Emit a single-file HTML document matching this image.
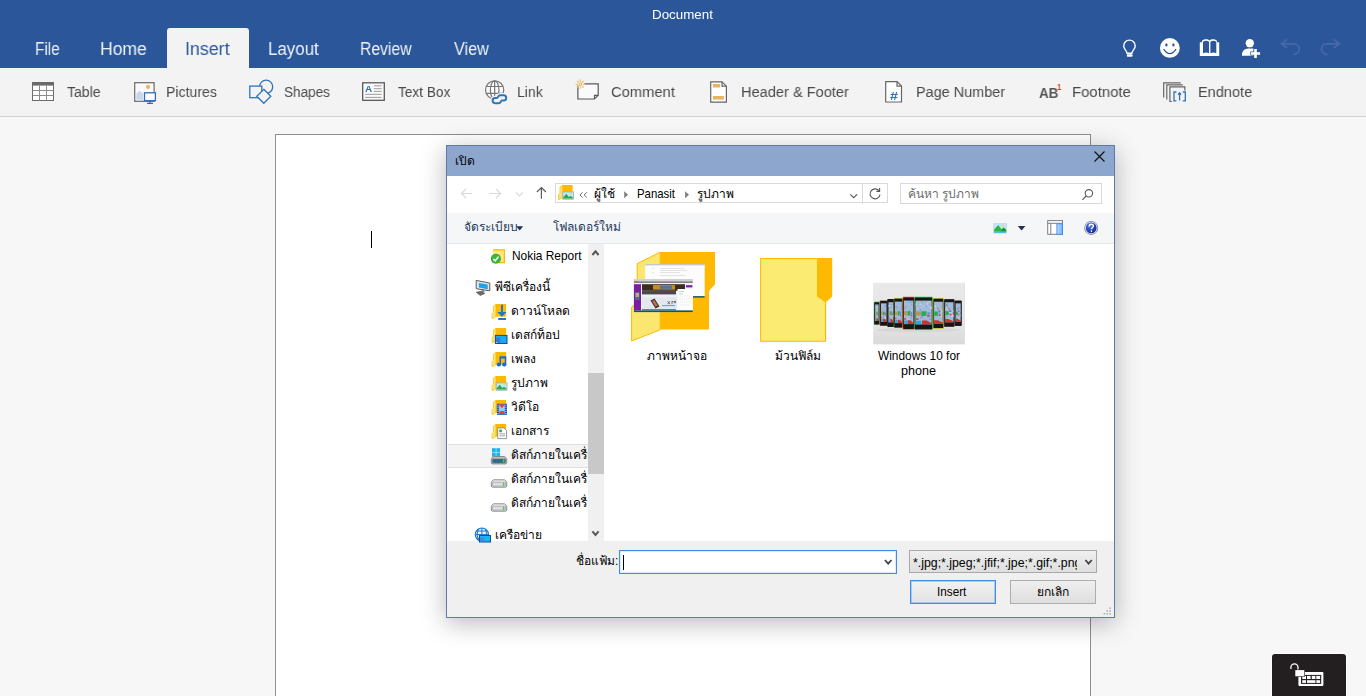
<!DOCTYPE html>
<html lang="th">
<head>
<meta charset="utf-8">
<title>Document - Word</title>
<style>
*{box-sizing:border-box;margin:0;padding:0}
html,body{width:1366px;height:696px;overflow:hidden;background:#f7f7f7;font-family:"Liberation Sans",sans-serif}
.g{position:absolute;left:0;top:0}
.a{position:absolute}
.t{position:absolute;white-space:nowrap;transform-origin:0 0;line-height:20px;height:20px}
svg{position:absolute;overflow:visible}
#header .t,#ribbon .t{will-change:transform}
#hdr{position:absolute;left:0;top:0;width:1366px;height:68px;background:#2b579a}
#tabsel{position:absolute;left:167px;top:28px;width:82px;height:40px;background:#f3f3f3;border-radius:3px 3px 0 0}
#rib{position:absolute;left:0;top:68px;width:1366px;height:49px;background:#f3f3f3;border-bottom:1px solid #d2d2d2}
#page{position:absolute;left:275px;top:134px;width:816px;height:570px;background:#fff;border:1px solid #8e8e8e}
#caret{position:absolute;left:371px;top:231px;width:1px;height:17px;background:#000}
#dlg{position:absolute;left:446px;top:145px;width:669px;height:473px;background:#fff;border:1px solid #5f79aa;box-shadow:0 5px 24px rgba(0,0,0,.28)}
#dtitle{position:absolute;left:447px;top:146px;width:667px;height:30px;background:#8da6ce}
#dtool{position:absolute;left:447px;top:213px;width:667px;height:31px;background:#f5f6f7;border-bottom:1px solid #e6e7e8}
#dfoot{position:absolute;left:447px;top:541px;width:667px;height:76px;background:#f0f0f0}
#kbd{position:absolute;left:1272px;top:654px;width:74px;height:50px;background:#231f20;border-radius:3px 3px 0 0;box-shadow:0 0 0 1px rgba(255,255,255,.7)}
</style>
</head>
<body>
<!-- ================= Word header ================= -->
<div id="hdr"></div>
<div class="g" id="header">
<div id="tabsel"></div>
<span class="t" style="left:652.14px;top:5px;font-size:13px;color:#fff;transform:scaleX(1.0276)">Document</span>
<span class="t" style="left:35.24px;top:39px;font-size:18.3px;color:rgba(255,255,255,.92);transform:scaleX(0.8406)">File</span>
<span class="t" style="left:99.96px;top:39px;font-size:18.3px;color:rgba(255,255,255,.92);transform:scaleX(0.9613)">Home</span>
<span class="t" style="left:184.70px;top:39px;font-size:18.3px;color:#2b579a;transform:scaleX(0.9732)">Insert</span>
<span class="t" style="left:268.21px;top:39px;font-size:18.3px;color:rgba(255,255,255,.92);transform:scaleX(0.9239)">Layout</span>
<span class="t" style="left:359.51px;top:39px;font-size:18.3px;color:rgba(255,255,255,.92);transform:scaleX(0.8598)">Review</span>
<span class="t" style="left:454.49px;top:39px;font-size:18.3px;color:rgba(255,255,255,.92);transform:scaleX(0.8866)">View</span>
<svg style="left:1120px;top:36px" width="20" height="24" viewBox="1120 36 20 24"><path d="M1127 53.2C1127 50.4 1123.7 49.6 1123.7 45.9a5.75 5.75 0 0 1 11.5 0C1135.2 49.6 1131.9 50.4 1131.9 53.2Z" fill="none" stroke="#fff" stroke-width="1.4"/><rect x="1126.8" y="54.3" width="5.8" height="2.4" rx=".9" fill="#fff"/></svg>
<svg style="left:1158px;top:36px" width="24" height="24" viewBox="1158 36 24 24"><circle cx="1169.85" cy="47.9" r="9.9" fill="#fff"/><ellipse cx="1166.4" cy="44.9" rx="1.15" ry="1.65" fill="#2b579a"/><ellipse cx="1173.4" cy="44.9" rx="1.15" ry="1.65" fill="#2b579a"/><path d="M1164 49.6Q1169.85 57.6 1175.7 49.6" fill="none" stroke="#2b579a" stroke-width="1.4" stroke-linecap="round"/></svg>
<svg style="left:1198px;top:36px" width="24" height="24" viewBox="1198 36 24 24"><path d="M1199.8 42.3H1202V40.8C1204.5 38.8 1208 38.9 1209.5 40.6C1211 38.9 1214.5 38.8 1217 40.8V42.3H1219.2V56.1H1199.8Z" fill="#fff"/><path d="M1203 41.7Q1206 39.9 1209 41.7V53.2Q1206 51.9 1203 53.2ZM1210.4 41.7Q1213.4 39.9 1216.3 41.7V53.2Q1213.4 51.9 1210.4 53.2Z" fill="#2b579a"/></svg>
<svg style="left:1240px;top:36px" width="24" height="24" viewBox="1240 36 24 24"><circle cx="1249.8" cy="43.2" r="4.15" fill="#fff"/><path d="M1241.9 55.7Q1241.9 48.4 1248.6 48.4H1253.6V55.7Z" fill="#fff"/><path d="M1254.2 48.9h2.6v3.3h3.3v2.6h-3.3v3.1h-2.6v-3.1h-3.3v-2.6h3.3z" fill="#fff" stroke="#2b579a" stroke-width="1.3" paint-order="stroke"/></svg>
<svg style="left:1278px;top:36px" width="24" height="24" viewBox="1278 36 24 24"><path d="M1287 39.6L1281.4 43.8L1287 48M1281.8 43.8H1293.5C1297.5 43.8 1299.3 46.5 1299.3 49C1299.3 52 1297 54.3 1293.3 54.3" fill="none" stroke="#4769a9" stroke-width="1.7"/></svg>
<svg style="left:1318px;top:36px" width="24" height="24" viewBox="1318 36 24 24"><path d="M1333.8 39.6L1339.4 43.8L1333.8 48M1339 43.8H1327.3C1323.3 43.8 1321.5 46.5 1321.5 49C1321.5 52 1323.8 54.3 1327.5 54.3" fill="none" stroke="#4769a9" stroke-width="1.7"/></svg>

</div>
<!-- ================= Ribbon ================= -->
<div id="rib"></div>
<div class="g" id="ribbon">
<svg style="left:30px;top:78px" width="28" height="28" viewBox="30 78 28 28"><rect x="32.5" y="82.5" width="21" height="18" fill="#fff" stroke="#6a6a6a"/><rect x="32" y="82" width="22" height="3.6" fill="#6a6a6a"/><path d="M39.5 85.6V100.5M46.5 85.6V100.5M32.5 90.5H53.5M32.5 95.5H53.5" stroke="#8c8c8c" fill="none"/></svg>
<svg style="left:132px;top:78px" width="28" height="28" viewBox="132 78 28 28"><rect x="134.7" y="82.7" width="19.4" height="18.6" fill="#fafafa" stroke="#6a6a6a" stroke-width="1.2"/><circle cx="148" cy="86.9" r="2.1" fill="#e8b76b"/><path d="M136.3 99.7V93.8L139.6 90.8L142.9 93.8V99.7Z" fill="#c5d9ec"/><rect x="144.5" y="92.8" width="10.9" height="7.9" fill="#fff" stroke="#2e6db4" stroke-width="1.3"/><path d="M150 100.9V103.2M147 103.3H153" stroke="#2e6db4" stroke-width="1.3" fill="none"/></svg>
<svg style="left:246px;top:78px" width="30" height="28" viewBox="246 78 30 28"><g stroke="#2e75b6" stroke-width="1.3"><circle cx="266.1" cy="86.8" r="6.6" fill="none"/><rect x="249.8" y="86.1" width="12" height="11.6" fill="#f3f3f3"/><path d="M263.8 89.3L270.8 96.3L263.8 103.3L256.8 96.3Z" fill="#f3f3f3"/></g></svg>
<svg style="left:360px;top:78px" width="28" height="28" viewBox="360 78 28 28"><rect x="362.7" y="82.8" width="21.6" height="17.5" fill="#fafafa" stroke="#595959" stroke-width="1.3"/><path d="M373.9 85.8H381.6M373.9 88.7H381.6M373.9 91.4H381.6M365.2 94.3H381.6M365.2 97.4H381.6" stroke="#9a9a9a" fill="none"/></svg>
<svg style="left:482px;top:78px" width="28" height="28" viewBox="482 78 28 28"><g fill="none" stroke="#777" stroke-width="1.2"><circle cx="494.65" cy="89.9" r="9.1" fill="#fafafa"/><ellipse cx="494.65" cy="89.9" rx="4.3" ry="9.1"/><path d="M494.65 80.8V99M486.4 86.5H502.9M486.4 93.4H502.9"/></g><g fill="none" stroke-linecap="round"><path d="M497 99.3h-1.8a2.6 2.6 0 0 0 0 5.2h3.2a2.6 2.6 0 0 0 2.4-1.6M501.7 101.8h1.9a2.6 2.6 0 0 0 0-5.2h-3.2a2.6 2.6 0 0 0-2.4 1.6" stroke="#f3f3f3" stroke-width="4.6" transform="translate(0,-1.3)"/><path d="M497 99.3h-1.8a2.6 2.6 0 0 0 0 5.2h3.2a2.6 2.6 0 0 0 2.4-1.6M501.7 101.8h1.9a2.6 2.6 0 0 0 0-5.2h-3.2a2.6 2.6 0 0 0-2.4 1.6" stroke="#2e75b6" stroke-width="2" transform="translate(0,-1.3)"/></g></svg>
<svg style="left:574px;top:78px" width="28" height="28" viewBox="574 78 28 28"><path d="M577.9 85.5V99H594.5L598.2 95.3V83.8H584.5" fill="#fafafa" stroke="#595959" stroke-width="1.2"/><path d="M594.5 99V95.3H598.2" fill="none" stroke="#595959" stroke-width="1.2"/><path d="M580.3 79.6v2.2M580.3 86.6v2.2M575.7 84.2h2.2M582.7 84.2h2.2M577 80.9l1.6 1.6M583.6 80.9l-1.6 1.6M577 87.5l1.6-1.6M583.6 87.5l-1.6-1.6" stroke="#edb458" stroke-width="1.1" fill="none"/><rect x="579.2" y="83.1" width="2.2" height="2.2" fill="none" stroke="#edb458" stroke-width=".9"/></svg>
<svg style="left:708px;top:78px" width="24" height="28" viewBox="708 78 24 28"><path d="M710.7 81.8H722L726.4 86.2V102.1H710.7Z" fill="#fff" stroke="#666" stroke-width="1.2"/><path d="M722 81.8V86.2H726.4" fill="none" stroke="#666" stroke-width="1.2"/><rect x="712.9" y="84" width="7.2" height="3.5" fill="#e8b660"/><rect x="712.9" y="96" width="11" height="3.6" fill="#e8b660"/></svg>
<svg style="left:883px;top:78px" width="24" height="28" viewBox="883 78 24 28"><path d="M885.7 81.6H897L901.5 86.1V102H885.7Z" fill="#fff" stroke="#666" stroke-width="1.2"/><path d="M897 81.6V86.1H901.5" fill="none" stroke="#666" stroke-width="1.2"/></svg>
<svg style="left:1160px;top:78px" width="30" height="28" viewBox="1160 78 30 28"><path d="M1180.7 82.8H1163.7V97.6M1182.8 84.8H1166.8V99.6M1171.9 101.5H1169.9V86.9H1184.8V90.4" fill="none" stroke="#666" stroke-width="1.2"/><path d="M1176.4 92H1174V100.9H1176.4M1182.8 92H1185.3V100.9H1182.8M1179.6 100.4V93.2M1178.1 94.6L1179.6 92.7L1181.1 94.6" fill="none" stroke="#2e75b6" stroke-width="1.3"/></svg>

<span class="t" style="left:66.66px;top:82px;font-size:15.5px;color:#4a4a4a;transform:scaleX(0.9056)">Table</span>
<span class="t" style="left:165.86px;top:82px;font-size:15.5px;color:#4a4a4a;transform:scaleX(0.9099)">Pictures</span>
<span class="t" style="left:283.94px;top:82px;font-size:15.5px;color:#4a4a4a;transform:scaleX(0.8741)">Shapes</span>
<span class="t" style="left:397.87px;top:82px;font-size:15.5px;color:#4a4a4a;transform:scaleX(0.8815)">Text Box</span>
<span class="t" style="left:517.37px;top:82px;font-size:15.5px;color:#4a4a4a;transform:scaleX(0.9069)">Link</span>
<span class="t" style="left:611.04px;top:82px;font-size:15.5px;color:#4a4a4a;transform:scaleX(0.9492)">Comment</span>
<span class="t" style="left:741.12px;top:82px;font-size:15.5px;color:#4a4a4a;transform:scaleX(0.9410)">Header &amp; Footer</span>
<span class="t" style="left:916.24px;top:82px;font-size:15.5px;color:#4a4a4a;transform:scaleX(0.9317)">Page Number</span>
<span class="t" style="left:1038.65px;top:83px;font-size:14.6px;color:#555;font-weight:700;transform:scaleX(0.9200)">AB</span>
<span class="t" style="left:1057.10px;top:77px;font-size:9.9px;color:#d24726;font-weight:700;transform:scaleX(0.8000)">1</span>
<span class="t" style="left:364.93px;top:79px;font-size:9.3px;color:#2e6db4;font-weight:700;transform:scaleX(1.0720)">A</span>
<span class="t" style="left:890.03px;top:87px;font-size:10.4px;color:#2e75b6;font-weight:700;transform:scaleX(1.3818)">#</span>
<span class="t" style="left:1071.80px;top:82px;font-size:15.5px;color:#4a4a4a;transform:scaleX(0.9620)">Footnote</span>
<span class="t" style="left:1197.53px;top:82px;font-size:15.5px;color:#4a4a4a;transform:scaleX(0.9381)">Endnote</span>
</div>
<!-- ================= Document canvas ================= -->
<div class="g" id="doc">
<div id="page"></div>
<div id="caret"></div>
</div>
<!-- ================= Open-file dialog ================= -->
<div id="dlg"></div>
<div class="g" id="dialog">
<div id="dtitle"></div>
<div id="dtool"></div>
<div id="dfoot"></div>
<div class="a" id="addr" style="left:555px;top:183px;width:333px;height:20px;border:1px solid #d9d9d9;background:#fff"></div>
<div class="a" style="left:862px;top:183px;width:1px;height:21px;background:#d9d9d9"></div>
<div class="a" id="search" style="left:900px;top:183px;width:202px;height:21px;border:1px solid #d9d9d9;background:#fff"></div>
<div class="a" id="navsel" style="left:448px;top:444px;width:140px;height:24px;background:#f4f4f4;border:1px solid #e0e0e0;border-left:0;border-right:0"></div>
<div class="a" id="sbtrack" style="left:588px;top:244px;width:16px;height:297px;background:#f0f0f0"></div>
<div class="a" id="sbthumb" style="left:588px;top:373px;width:16px;height:101px;background:#c8c8c8"></div>
<div class="a" id="fname" style="left:619px;top:550px;width:278px;height:24px;border:1px solid #3d8ce6;background:#fff;box-shadow:inset 0 0 0 1px rgba(61,140,230,.18)"></div>
<div class="a" style="left:623px;top:555px;width:1px;height:15px;background:#000"></div>
<div class="a" id="filter" style="left:909px;top:550px;width:188px;height:23px;border:1px solid #a9a9a9;background:linear-gradient(#efefef,#dfdfdf)"></div>
<div class="a" id="btnok" style="left:910px;top:580px;width:86px;height:24px;border:1px solid #3c8de8;background:linear-gradient(#f1f1f1,#e3e3e3);box-shadow:inset 0 0 0 1px rgba(60,141,232,.35)"></div>
<div class="a" id="btncancel" style="left:1010px;top:580px;width:86px;height:24px;border:1px solid #adadad;background:linear-gradient(#efefef,#dedede)"></div>

<svg style="left:1090px;top:148px" width="18" height="18" viewBox="1090 148 18 18"><path d="M1094.5 151.5L1104.5 161.5M1104.5 151.5L1094.5 161.5" stroke="#111" stroke-width="1.15" fill="none"/></svg>
<svg style="left:458px;top:184px" width="92" height="20" viewBox="458 184 92 20"><g fill="none" stroke-width="1.2"><path d="M472 193.5H461.6M466 189L461.5 193.5L466 198" stroke="#dadada"/><path d="M489.5 193.5H500.4M496 189L500.5 193.5L496 198" stroke="#dadada"/><path d="M516 192.4L519.4 195.8L522.8 192.4" stroke="#dadada"/><path d="M541.4 198.8V187.8M536.9 192L541.4 187.5L545.9 192" stroke="#5c5c5c"/></g></svg>
<svg style="left:576px;top:184px" width="320" height="20" viewBox="576 184 320 20"><g fill="none" stroke="#6d6d6d" stroke-width="1"><path d="M582.6 192.3L579.9 194.9L582.6 197.5M586.8 192.3L584.1 194.9L586.8 197.5"/><path d="M850.3 194.3L853.7 197.7L857.1 194.3" stroke="#555" stroke-width="1.1"/><path d="M879.3 191.2A5 5 0 1 0 880 194.6M876.3 191.4H879.6V188.1" stroke="#555" stroke-width="1.1"/></g><path d="M624.2 191.3L628.1 194.8L624.2 198.3ZM685.1 191.3L689 194.8L685.1 198.3Z" fill="#7f7f7f"/></svg>
<svg style="left:1080px;top:186px" width="16" height="16" viewBox="1080 186 16 16"><g fill="none" stroke="#5a5a5a" stroke-width="1.1"><circle cx="1088.9" cy="193.3" r="3.7"/><path d="M1086.2 196L1082.4 199.8"/></g></svg>
<svg style="left:514px;top:224px" width="12" height="9" viewBox="514 224 12 9"><path d="M516.2 226.3H523.2L519.7 230.5Z" fill="#1e2f4f"/></svg>
<svg style="left:992px;top:222px" width="36" height="13" viewBox="992 222 36 13"><rect x="993.7" y="223.7" width="12.8" height="9.4" fill="#b9ecf7" stroke="#d6cccc" stroke-width=".7"/><circle cx="1002.5" cy="225.6" r="1.15" fill="#f5d83a"/><path d="M994.1 231.6V229.5L998.2 224.9L1001.6 229.3L1003.6 227.6L1006.1 230V231.6Z" fill="#36b049"/><path d="M1000.6 231.6L1003.6 227.6L1006.1 230V231.6Z" fill="#258c3a"/><rect x="994.1" y="231.4" width="12" height="1.3" fill="#1fb3e0"/><path d="M1017.8 226.1H1025.4L1021.6 230.4Z" fill="#1e2f4f"/></svg>
<svg style="left:1046px;top:219px" width="19" height="17" viewBox="1046 219 19 17"><defs><linearGradient id="pg" x1="0" x2="1"><stop offset="0" stop-color="#bcdafa"/><stop offset="1" stop-color="#74b2f6"/></linearGradient></defs><rect x="1047.7" y="220.6" width="14.8" height="13.7" fill="#fff" stroke="#7d7d7d" stroke-width="1"/><path d="M1047.7 223.3H1062.5M1050.8 223.3V234.3" stroke="#7d7d7d" stroke-width="1" fill="none"/><rect x="1056.9" y="223.8" width="5.6" height="10.5" fill="url(#pg)" stroke="#3b8df0" stroke-width=".9"/></svg>
<svg style="left:1083px;top:220px" width="17" height="17" viewBox="1083 220 17 17"><defs><radialGradient id="hg" cx=".38" cy=".3" r=".8"><stop offset="0" stop-color="#5a7fe8"/><stop offset=".55" stop-color="#2443b8"/><stop offset="1" stop-color="#15267a"/></radialGradient></defs><circle cx="1091.2" cy="227.9" r="7" fill="#7f87a3"/><circle cx="1091.2" cy="227.9" r="6.2" fill="#e3e7f3"/><circle cx="1091.2" cy="227.9" r="5.4" fill="url(#hg)"/><path d="M1089.2 226.4C1089.2 224.8 1090.2 224.2 1091.3 224.2C1092.5 224.2 1093.4 224.9 1093.4 226C1093.4 227.4 1091.4 227.7 1091.4 229.3" fill="none" stroke="#fff" stroke-width="1.5"/><circle cx="1091.4" cy="231.1" r=".85" fill="#fff"/></svg>
<svg style="left:590px;top:248px" width="12" height="292" viewBox="590 248 12 292"><g fill="none" stroke="#585858" stroke-width="2"><path d="M592.4 255L595.5 251.3L598.6 255M592.4 531.3L595.5 535L598.6 531.3"/></g></svg>
<svg style="left:882px;top:556px" width="12" height="12" viewBox="882 556 12 12"><path d="M884.9 560L888.2 563.6L891.5 560" fill="none" stroke="#444" stroke-width="1.8"/></svg>
<svg style="left:1083px;top:556px" width="12" height="12" viewBox="1083 556 12 12"><path d="M1085.4 560L1088.6 563.6L1091.8 560" fill="none" stroke="#444" stroke-width="1.8"/></svg>
<svg style="left:1102px;top:606px" width="10" height="10" viewBox="1102 606 10 10"><g fill="#b4b4b4"><rect x="1109.2" y="607.4" width="1.6" height="1.6"/><rect x="1106.4" y="610.2" width="1.6" height="1.6"/><rect x="1109.2" y="610.2" width="1.6" height="1.6"/><rect x="1103.6" y="613" width="1.6" height="1.6"/><rect x="1106.4" y="613" width="1.6" height="1.6"/><rect x="1109.2" y="613" width="1.6" height="1.6"/></g></svg>
<svg style="left:557px;top:184px" width="18" height="17" viewBox="557 184 18 17"><rect x="562.4" y="185" width="10.2" height="12.6" fill="#ffb900"/><path d="M562.4 185.3L559.9 187.2V193.4L558.6 194.5V199.8L562.4 197.8Z" fill="#fbe57a" stroke="#ffb900" stroke-width=".7"/><rect x="562.7" y="191.9" width="10.8" height="7.3" fill="#b9ecf7" stroke="#a9a9a9" stroke-width=".8"/><circle cx="570.9" cy="193.6" r=".9" fill="#f5d83a"/><path d="M563.2 198.6V197.2L566.3 193.8L568.9 197L570.5 195.7L573 197.8V198.6Z" fill="#2fa84f"/></svg>
<svg style="left:490px;top:248px" width="16" height="16" viewBox="490 248 16 16"><rect x="493.2" y="249.6" width="11.2" height="12.8" fill="#fce97a"/><path d="M493 249.9H504.4V262.6H499" fill="none" stroke="#ffb900" stroke-width="1.2"/><circle cx="495.9" cy="258.8" r="5" fill="#2ea52e"/><circle cx="495.9" cy="258.8" r="4.2" fill="#3db83d"/><path d="M493.4 258.9L495.2 260.9L498.5 256.6" fill="none" stroke="#fff" stroke-width="1.5"/></svg>
<svg style="left:475px;top:279px" width="16" height="18" viewBox="475 279 16 18"><path d="M476.2 280.4L489.8 283.1V290.8L476.2 288.7Z" fill="#e6e6e6" stroke="#5a5a5a" stroke-width="1"/><path d="M478.9 282.9L487.7 284.6V289.3L478.9 287.6Z" fill="#1aa3ec"/><path d="M481.6 289.7L484.4 290.2V292.6L481.6 292.2Z" fill="#8a8a8a"/><path d="M476.2 292.3L481 291.3L484.9 293.4L480.3 295.6Z" fill="#6a6a6a" stroke="#555" stroke-width=".6"/></svg>
<svg style="left:491px;top:304px" width="17" height="17" viewBox="491 304 17 17"><rect x="495.9" y="304" width="10.2" height="12.6" fill="#ffb900"/><path d="M495.9 304.3L493.4 306.2V312.4L492.1 313.5V318.8L495.9 316.8Z" fill="#fbe57a" stroke="#ffb900" stroke-width=".7"/><path d="M501 304.8h1.9v7.2h3.7l-4.65 4.7l-4.65-4.7h3.7zM498.2 317.9h7.8v2h-7.8z" fill="#1976d2"/></svg>
<svg style="left:491px;top:328px" width="17" height="17" viewBox="491 328 17 17"><rect x="495.9" y="328" width="10.2" height="12.6" fill="#ffb900"/><path d="M495.9 328.3L493.4 330.2V336.4L492.1 337.5V342.8L495.9 340.8Z" fill="#fbe57a" stroke="#ffb900" stroke-width=".7"/><rect x="495.4" y="335.4" width="11.6" height="8.1" fill="#1aa9ee" stroke="#0b4fa0" stroke-width="1"/><rect x="496" y="337.6" width="4.2" height="5.3" fill="#3a78d6"/><rect x="496.2" y="342" width=".9" height=".9" fill="#fff"/></svg>
<svg style="left:491px;top:352px" width="17" height="17" viewBox="491 352 17 17"><rect x="495.9" y="352" width="10.2" height="12.6" fill="#ffb900"/><path d="M495.9 352.3L493.4 354.2V360.4L492.1 361.5V366.8L495.9 364.8Z" fill="#fbe57a" stroke="#ffb900" stroke-width=".7"/><g fill="#1769d6"><path d="M499.5 356.2H506.3V364.4h-1.5V358.6H501V364.4h-1.5Z"/><ellipse cx="498.9" cy="364.5" rx="2.2" ry="1.9"/><ellipse cx="504.2" cy="364.5" rx="2.2" ry="1.9"/></g></svg>
<svg style="left:491px;top:376px" width="17" height="17" viewBox="491 376 17 17"><rect x="495.9" y="376" width="10.2" height="12.6" fill="#ffb900"/><path d="M495.9 376.3L493.4 378.2V384.4L492.1 385.5V390.8L495.9 388.8Z" fill="#fbe57a" stroke="#ffb900" stroke-width=".7"/><rect x="496.2" y="382.9" width="10.8" height="7.3" fill="#b9ecf7" stroke="#a9a9a9" stroke-width=".8"/><circle cx="504.4" cy="384.6" r=".9" fill="#f5d83a"/><path d="M496.7 389.6V388.2L499.8 384.8L502.4 388L504 386.7L506.5 388.8V389.6Z" fill="#2fa84f"/></svg>
<svg style="left:491px;top:400px" width="17" height="17" viewBox="491 400 17 17"><rect x="495.9" y="400" width="10.2" height="12.6" fill="#ffb900"/><path d="M495.9 400.3L493.4 402.2V408.4L492.1 409.5V414.8L495.9 412.8Z" fill="#fbe57a" stroke="#ffb900" stroke-width=".7"/><rect x="496.9" y="403.8" width="10.1" height="11" fill="#0f4fa8"/><rect x="499.1" y="404.6" width="5.7" height="9.4" fill="#8fd3f7"/><path d="M499.1 404.6h5.7l-2.85 3.6zM499.1 414a2.85 3.2 0 0 1 5.7 0z" fill="#e8402a"/><g fill="#d6ecff"><rect x="497.5" y="404.6" width="1" height="1.1"/><rect x="505.4" y="404.6" width="1" height="1.1"/><rect x="497.5" y="406.7" width="1" height="1.1"/><rect x="505.4" y="406.7" width="1" height="1.1"/><rect x="497.5" y="408.8" width="1" height="1.1"/><rect x="505.4" y="408.8" width="1" height="1.1"/><rect x="497.5" y="410.9" width="1" height="1.1"/><rect x="505.4" y="410.9" width="1" height="1.1"/><rect x="497.5" y="413" width="1" height="1.1"/><rect x="505.4" y="413" width="1" height="1.1"/></g></svg>
<svg style="left:491px;top:424px" width="17" height="17" viewBox="491 424 17 17"><rect x="495.9" y="424" width="10.2" height="12.6" fill="#ffb900"/><path d="M495.9 424.3L493.4 426.2V432.4L492.1 433.5V438.8L495.9 436.8Z" fill="#fbe57a" stroke="#ffb900" stroke-width=".7"/><path d="M497.7 427.9h6.2l2.7 2.7v8h-8.9z" fill="#fff" stroke="#8a8a8a" stroke-width=".9"/><rect x="499.3" y="429.6" width="2.6" height="2.6" fill="#2fa84f"/><path d="M499.3 433.8h5.8M499.3 435.8h5.8" stroke="#9a9a9a" stroke-width=".9" fill="none"/></svg>
<svg style="left:490px;top:447px" width="18" height="18" viewBox="490 447 18 18"><rect x="492" y="448.2" width="3.8" height="4" fill="#19b5f1"/><rect x="492" y="452.7" width="3.8" height="4" fill="#19b5f1"/><rect x="496.3" y="448.2" width="3.8" height="4" fill="#19b5f1"/><rect x="496.3" y="452.7" width="3.8" height="4" fill="#19b5f1"/><path d="M491.3 459.3Q491.3 457.9 493.6 456.5H504.4Q506.7 457.9 506.7 459.3V462.7Q506.7 463.9 505.4 463.9H492.6Q491.3 463.9 491.3 462.7Z" fill="#b9bcc0" stroke="#858585" stroke-width=".9"/><rect x="492.4" y="458.9" width="13.2" height="4" rx=".8" fill="#2a6c8c" stroke="#7a7a7a" stroke-width=".5"/><rect x="502.8" y="459.4" width="1.5" height="3" fill="#4fd02f"/></svg>
<svg style="left:490px;top:478px" width="18" height="11" viewBox="490 478 18 11"><path d="M491.3 482.6Q491.3 481.2 493.6 479.8H504.4Q506.7 481.2 506.7 482.6V486Q506.7 487.2 505.4 487.2H492.6Q491.3 487.2 491.3 486Z" fill="#ececec" stroke="#858585" stroke-width=".9"/><rect x="492.4" y="482.2" width="13.2" height="4" rx=".8" fill="#dcdde6" stroke="#7a7a7a" stroke-width=".5"/><rect x="502.8" y="482.7" width="1.5" height="3" fill="#4fd02f"/></svg>
<svg style="left:490px;top:502px" width="18" height="11" viewBox="490 502 18 11"><path d="M491.3 506.6Q491.3 505.2 493.6 503.8H504.4Q506.7 505.2 506.7 506.6V510Q506.7 511.2 505.4 511.2H492.6Q491.3 511.2 491.3 510Z" fill="#ececec" stroke="#858585" stroke-width=".9"/><rect x="492.4" y="506.2" width="13.2" height="4" rx=".8" fill="#dcdde6" stroke="#7a7a7a" stroke-width=".5"/><rect x="502.8" y="506.7" width="1.5" height="3" fill="#4fd02f"/></svg>
<svg style="left:474px;top:527px" width="18" height="14" viewBox="474 527 18 14"><circle cx="481.9" cy="534.6" r="6.6" fill="#e6f4fd" stroke="#1976d2" stroke-width="1.2"/><path d="M481.9 528V541M475.3 534.6H488.5M476.6 531H487.2M476.6 538.2H487.2M478.5 529C476.8 532.5 476.8 536.7 478.5 540.2M485.3 529C487 532.5 487 536.7 485.3 540.2" fill="none" stroke="#1976d2" stroke-width="1"/><rect x="479.5" y="535.5" width="11" height="6.5" fill="#19b5f1" stroke="#0b4fa0" stroke-width="1"/><rect x="480" y="537.5" width="4.5" height="4" fill="#3a8de0"/></svg>
<svg style="left:630px;top:250px" width="88" height="93" viewBox="630 250 88 93"><path d="M660.2 252H715V284.2L709 291V329.6H660.2Z" fill="#ffb900"/><path d="M660.2 252.2L637.2 263.6V302.9L631.6 307V341L660.2 329.8Z" fill="#fbe76f" stroke="#ffb900" stroke-width="1"/><rect x="645.1" y="264.2" width="59.6" height="33.5" fill="#fcfcfc"/><rect x="645.1" y="264.2" width="59.6" height="1.1" fill="#b9bec3"/><rect x="693" y="296.1" width="11.7" height="1.6" fill="#0e5a56"/><path d="M660 268.5h24M660 270.5h27M660 272.5h20M660 275.5h26M652 268.5h2M652 272.5h2" stroke="#dcdcdc" stroke-width=".8" fill="none"/><rect x="633.9" y="279" width="58.9" height="33.1" fill="#eef1f5"/><rect x="633.9" y="279" width="58.9" height="2.6" fill="#cfd2d4"/><rect x="634.5" y="281" width="4" height=".8" fill="#e0902a"/><rect x="633.9" y="281.6" width="58.9" height="1.2" fill="#4a4a4a"/><rect x="633.9" y="282.8" width="58.9" height="1.4" fill="#f4f4f4"/><rect x="633.9" y="284.2" width="7.1" height="26.2" fill="#7b1fa2"/><rect x="635" y="292" width="4.6" height="8" fill="#5a6a7a"/><rect x="635.6" y="293" width="3.4" height="4" fill="#c0a890"/><rect x="642" y="284.2" width="43" height="6.6" fill="#3a2c20"/><rect x="653" y="285" width="22" height="4.6" fill="#c98a1c"/><rect x="660" y="285.6" width="12" height="3.2" fill="#5a6f9a"/><rect x="642" y="290.8" width="34" height="3.6" fill="#4a4a4a"/><rect x="686" y="285.2" width="6.4" height="2.2" fill="#7b1fa2"/><rect x="677.5" y="289" width="15.3" height="21.4" fill="#fdfdfd"/><rect x="642" y="297" width="35" height="12" fill="#e3e9ef"/><path d="M650.5 300.5L654.5 298.5L659.5 306.5L655.5 308.5Z" fill="#3a3030"/><path d="M652 301L654.3 299.9L657.8 305.6L655.5 306.7Z" fill="#c86a50"/><path d="M667.5 301.2l2.5 3M670 301.2l-2.5 3M672 304.2v-3l1 .6M674 301.4h1.6v1.2H674z" stroke="#444" stroke-width=".7" fill="none"/><rect x="662" y="305.2" width="13" height=".9" fill="#3aa0e8"/><rect x="642" y="309" width="34" height="1.4" fill="#3f8fd6"/><rect x="633.9" y="310.4" width="58.9" height="1.7" fill="#0e5a56"/><path d="M680 296h10M680 299h10M680 302h10M680 305h10" stroke="#d9d9d9" stroke-width=".8" stroke-dasharray=".8 1.4" fill="none"/><path d="M679 291.5h5M679 293.8h4" stroke="#7fc4b8" stroke-width=".6" fill="none"/></svg>
<svg style="left:758px;top:256px" width="76" height="88" viewBox="758 256 76 88"><rect x="760.6" y="258.5" width="65" height="82.8" fill="#fbeb72" stroke="#ffb900" stroke-width="1"/><path d="M817 258H832.2V296.6L825.6 302.4L817 296.6Z" fill="#ffb900"/><path d="M825.6 302V341" stroke="#ffb900" stroke-width="1"/></svg>
<svg style="left:872px;top:281px" width="95" height="65" viewBox="872 281 95 65"><defs><linearGradient id="ig" x1="0" y1="0" x2="0" y2="1"><stop offset="0" stop-color="#e9e9e9"/><stop offset=".7" stop-color="#e3e3e3"/><stop offset="1" stop-color="#dadada"/></linearGradient></defs><rect x="873.4" y="282.9" width="91.6" height="61.6" fill="#c9c9c9" opacity=".55"/><rect x="873.4" y="282.9" width="90.9" height="60.9" fill="url(#ig)"/><ellipse cx="918" cy="330" rx="42" ry="2.2" fill="#d7d7d7"/><rect x="873.9" y="301.8" width="5.8" height="23" rx=".9" fill="#2e7d32"/><rect x="874.5" y="302.4" width="4.6" height="21.8" rx=".6" fill="#161616"/><rect x="875.2" y="304.44" width="3.4" height="16.56" fill="#a3bbd9"/><rect x="875.78" y="306.64" width="1.06" height="2.15" fill="#95afd4"/><rect x="875.37" y="312.93" width="1.26" height="1.12" fill="#aebfd8"/><rect x="875.95" y="307.95" width="1.51" height="2.16" fill="#aebfd8"/><rect x="875.42" y="307.7" width="1.7" height="1.09" fill="#95afd4"/><rect x="876.25" y="305.17" width="1.06" height="2.2" fill="#8ea9cf"/><rect x="875.72" y="306.55" width="1.69" height="1.78" fill="#b7cbe4"/><rect x="876.43" y="305.95" width="1.77" height="1.52" fill="#aebfd8"/><rect x="875.4" y="312.06" width="1.02" height="2.82" fill="#b8935e"/><rect x="876.49" y="311.9" width="1.02" height="3.15" fill="#2ea84a"/><rect x="877.72" y="312.72" width="0.48" height="1.16" fill="#3a86e0"/><rect x="877.65" y="314.38" width="0.54" height="1.16" fill="#d8405a"/><rect x="875.4" y="316.7" width="0.61" height="1.32" fill="#d0553a"/><rect x="875.4" y="318.52" width="1.16" height="2.48" fill="#29a8e0"/><path d="M876.56 321V318.36H877.58L878.6 320.18V321Z" fill="#cf3030"/><rect x="879.7" y="300.4" width="7.9" height="25.5" rx=".9" fill="#8a4b2a"/><rect x="880.3" y="301" width="6.7" height="24.3" rx=".6" fill="#161616"/><rect x="881" y="303.33" width="5.5" height="18.36" fill="#a3bbd9"/><rect x="883.14" y="304.36" width="1.74" height="1.69" fill="#b7cbe4"/><rect x="883.07" y="316.05" width="1.7" height="1.63" fill="#7f9cc8"/><rect x="882.17" y="316.33" width="1.94" height="1.11" fill="#95afd4"/><rect x="882.17" y="311.43" width="1.88" height="1.4" fill="#c2d1e6"/><rect x="884.82" y="305.26" width="1.2" height="1.48" fill="#7f9cc8"/><rect x="884.64" y="310.23" width="1.09" height="1.78" fill="#95afd4"/><rect x="884.08" y="316.72" width="1.83" height="1.83" fill="#c2d1e6"/><rect x="883.26" y="310.8" width="2.13" height="1.66" fill="#b7cbe4"/><rect x="883.59" y="304.33" width="1.37" height="1.81" fill="#95afd4"/><rect x="883.66" y="310.62" width="1.46" height="1.94" fill="#95afd4"/><rect x="881.09" y="310.89" width="1.73" height="1.69" fill="#8ea9cf"/><rect x="881.85" y="308.03" width="1.3" height="1.55" fill="#95afd4"/><rect x="881.2" y="311.78" width="1.65" height="3.12" fill="#b8935e"/><rect x="883.09" y="311.59" width="1.65" height="3.49" fill="#2ea84a"/><rect x="885.07" y="312.51" width="0.77" height="1.29" fill="#3a86e0"/><rect x="884.96" y="314.35" width="0.88" height="1.29" fill="#d8405a"/><rect x="881.2" y="316.92" width="0.99" height="1.47" fill="#d0553a"/><rect x="881.2" y="318.94" width="1.87" height="2.75" fill="#29a8e0"/><path d="M883.2 321.69V318.75H884.85L886.5 320.77V321.69Z" fill="#cf3030"/><rect x="887.2" y="299" width="7.2" height="27.9" rx=".9" fill="#1c1c1c"/><rect x="887.8" y="299.6" width="6" height="26.7" rx=".6" fill="#161616"/><rect x="888.5" y="302.21" width="4.8" height="20.09" fill="#a3bbd9"/><rect x="891.29" y="303.67" width="1.48" height="1.39" fill="#7f9cc8"/><rect x="888.94" y="310" width="1.33" height="1.58" fill="#aebfd8"/><rect x="889.65" y="318.2" width="1.18" height="1.25" fill="#8ea9cf"/><rect x="889.24" y="306.43" width="2" height="1.26" fill="#7f9cc8"/><rect x="889.4" y="304.84" width="1.44" height="1.79" fill="#aebfd8"/><rect x="891.55" y="314.7" width="2.14" height="1.92" fill="#aebfd8"/><rect x="890.87" y="310.47" width="1.96" height="1.55" fill="#95afd4"/><rect x="889.78" y="304.08" width="1.48" height="1.27" fill="#95afd4"/><rect x="891.65" y="310.18" width="1.41" height="1.07" fill="#b7cbe4"/><rect x="888.5" y="304.94" width="2.14" height="1.86" fill="#b7cbe4"/><rect x="888.7" y="311.45" width="1.44" height="3.41" fill="#b8935e"/><rect x="890.32" y="311.25" width="1.44" height="3.82" fill="#2ea84a"/><rect x="892.05" y="312.25" width="0.67" height="1.41" fill="#3a86e0"/><rect x="891.96" y="314.26" width="0.77" height="1.41" fill="#d8405a"/><rect x="888.7" y="317.07" width="0.86" height="1.61" fill="#d0553a"/><rect x="888.7" y="319.28" width="1.63" height="3.01" fill="#29a8e0"/><path d="M890.42 322.3V319.08H891.86L893.3 321.29V322.3Z" fill="#cf3030"/><rect x="893.7" y="298.2" width="9.3" height="29.8" rx=".9" fill="#9aa01e"/><rect x="894.3" y="298.8" width="8.1" height="28.6" rx=".6" fill="#161616"/><rect x="895" y="301.63" width="6.9" height="21.46" fill="#a3bbd9"/><rect x="895.37" y="305.67" width="1.18" height="1.35" fill="#7f9cc8"/><rect x="896.84" y="308.71" width="1.14" height="1.68" fill="#b7cbe4"/><rect x="900.18" y="310.97" width="1.1" height="1.14" fill="#c2d1e6"/><rect x="896.82" y="306.78" width="1.19" height="1.03" fill="#95afd4"/><rect x="900.04" y="311.9" width="1.83" height="2.28" fill="#8ea9cf"/><rect x="899.02" y="307.43" width="2.04" height="1.97" fill="#95afd4"/><rect x="896.38" y="308.76" width="1.43" height="1.31" fill="#8ea9cf"/><rect x="897.87" y="311.41" width="1.27" height="2.14" fill="#95afd4"/><rect x="900.22" y="318.22" width="1.98" height="2.04" fill="#8ea9cf"/><rect x="896.2" y="311.7" width="1.88" height="2.39" fill="#c2d1e6"/><rect x="899.19" y="310.81" width="1.83" height="2.34" fill="#8ea9cf"/><rect x="897.37" y="319.86" width="2.15" height="1.51" fill="#c2d1e6"/><rect x="896.17" y="306.04" width="1.41" height="1.68" fill="#8ea9cf"/><rect x="900.22" y="313.5" width="1.58" height="1.91" fill="#b7cbe4"/><rect x="899.24" y="303.28" width="1.14" height="1.54" fill="#95afd4"/><rect x="895.2" y="311.5" width="2.07" height="3.65" fill="#b8935e"/><rect x="897.62" y="311.28" width="2.07" height="4.08" fill="#2ea84a"/><rect x="900.11" y="312.36" width="0.97" height="1.5" fill="#3a86e0"/><rect x="899.97" y="314.5" width="1.1" height="1.5" fill="#d8405a"/><rect x="895.2" y="317.5" width="1.24" height="1.72" fill="#d0553a"/><rect x="895.2" y="319.86" width="2.35" height="3.22" fill="#29a8e0"/><path d="M897.76 323.08V319.65H899.83L901.9 322.01V323.08Z" fill="#cf3030"/><rect x="954.3" y="300.4" width="7.5" height="25.5" rx=".9" fill="#222"/><rect x="954.9" y="301" width="6.3" height="24.3" rx=".6" fill="#161616"/><rect x="955.6" y="303.33" width="5.1" height="18.36" fill="#a3bbd9"/><rect x="958.09" y="306.59" width="1.52" height="1.89" fill="#8ea9cf"/><rect x="955.9" y="318.81" width="1.48" height="1.56" fill="#95afd4"/><rect x="958.91" y="315.19" width="2.19" height="1.04" fill="#8ea9cf"/><rect x="957.67" y="310.95" width="1.18" height="2.16" fill="#95afd4"/><rect x="959.03" y="314.09" width="1.19" height="1.77" fill="#c2d1e6"/><rect x="955.67" y="316.41" width="1.78" height="1.74" fill="#95afd4"/><rect x="958.87" y="310.43" width="1.99" height="1.3" fill="#8ea9cf"/><rect x="956.48" y="308.13" width="1.92" height="1.46" fill="#8ea9cf"/><rect x="957.51" y="316.98" width="2.09" height="1.5" fill="#b7cbe4"/><rect x="957.2" y="312.88" width="1.5" height="2.28" fill="#aebfd8"/><rect x="957.36" y="312.03" width="1.61" height="2.22" fill="#aebfd8"/><rect x="955.8" y="311.59" width="2.04" height="3.49" fill="#2ea84a"/><rect x="958.4" y="313.8" width="1.02" height="1.47" fill="#d03a50"/><rect x="958.15" y="310.68" width="1.12" height="1.47" fill="#3a7fe0"/><rect x="957.38" y="308.47" width="1.02" height="1.47" fill="#c07a5a"/><path d="M955.6 321.69V318.75H957.64L960.7 320.77V321.69Z" fill="#cf3030"/><rect x="943.9" y="299" width="10.7" height="27.9" rx=".9" fill="#4a4a4a"/><rect x="944.5" y="299.6" width="9.5" height="26.7" rx=".6" fill="#161616"/><rect x="945.2" y="302.21" width="8.3" height="20.09" fill="#a3bbd9"/><rect x="950.4" y="313.22" width="1.21" height="1.66" fill="#8ea9cf"/><rect x="950.06" y="312.27" width="1.82" height="1.74" fill="#c2d1e6"/><rect x="948.43" y="316.25" width="1.07" height="1.27" fill="#aebfd8"/><rect x="945.48" y="303.98" width="1.67" height="2.06" fill="#7f9cc8"/><rect x="951.31" y="310.23" width="2.17" height="1.85" fill="#aebfd8"/><rect x="946.54" y="307.22" width="1.64" height="1.67" fill="#aebfd8"/><rect x="951.51" y="314.86" width="2.11" height="2.25" fill="#c2d1e6"/><rect x="946.56" y="310.3" width="1.15" height="1.62" fill="#7f9cc8"/><rect x="945.69" y="306.56" width="1.26" height="1.42" fill="#b7cbe4"/><rect x="946.02" y="316.26" width="1.77" height="1.51" fill="#95afd4"/><rect x="946.9" y="304.69" width="1.26" height="2.33" fill="#7f9cc8"/><rect x="947.87" y="311.02" width="2" height="1.23" fill="#95afd4"/><rect x="948.09" y="311.53" width="1.51" height="1.5" fill="#c2d1e6"/><rect x="945.82" y="308.83" width="1.66" height="1.62" fill="#c2d1e6"/><rect x="945.32" y="308.2" width="1.35" height="2.35" fill="#aebfd8"/><rect x="945.96" y="318.82" width="2.17" height="1.15" fill="#8ea9cf"/><rect x="946.98" y="302.92" width="1.32" height="1.18" fill="#8ea9cf"/><rect x="948.03" y="318.69" width="1.49" height="1.75" fill="#c2d1e6"/><rect x="945.4" y="311.25" width="3.32" height="3.82" fill="#2ea84a"/><rect x="949.76" y="313.66" width="1.66" height="1.61" fill="#d03a50"/><rect x="949.35" y="310.24" width="1.83" height="1.61" fill="#3a7fe0"/><rect x="948.1" y="307.83" width="1.66" height="1.61" fill="#c07a5a"/><path d="M945.2 322.3V319.08H948.52L953.5 321.29V322.3Z" fill="#cf3030"/><rect x="932.8" y="298.2" width="11.1" height="30.5" rx=".9" fill="#c8b820"/><rect x="933.4" y="298.8" width="9.9" height="29.3" rx=".6" fill="#161616"/><rect x="934.1" y="301.71" width="8.7" height="21.96" fill="#a3bbd9"/><rect x="937.75" y="311.58" width="1.11" height="1.08" fill="#c2d1e6"/><rect x="938.99" y="310.2" width="1.32" height="1.02" fill="#b7cbe4"/><rect x="934.73" y="306.91" width="2.03" height="1.09" fill="#aebfd8"/><rect x="940.23" y="310.76" width="2.19" height="1.58" fill="#c2d1e6"/><rect x="940.6" y="314.12" width="1.63" height="1.33" fill="#b7cbe4"/><rect x="934.88" y="304.93" width="1.22" height="2.31" fill="#b7cbe4"/><rect x="938.56" y="312.31" width="1.35" height="1.7" fill="#8ea9cf"/><rect x="935.36" y="308.63" width="2.19" height="1.05" fill="#b7cbe4"/><rect x="934.23" y="311.8" width="1.62" height="1.34" fill="#8ea9cf"/><rect x="937.27" y="314.85" width="1.52" height="1.69" fill="#95afd4"/><rect x="940.03" y="309.55" width="1.37" height="1.3" fill="#aebfd8"/><rect x="935.73" y="305.67" width="1.87" height="1.2" fill="#95afd4"/><rect x="941.13" y="321.31" width="1.02" height="1.88" fill="#8ea9cf"/><rect x="940.35" y="310.31" width="1.1" height="2.18" fill="#b7cbe4"/><rect x="940.28" y="315.09" width="1.72" height="1.97" fill="#c2d1e6"/><rect x="934.42" y="305.41" width="1.53" height="1.37" fill="#c2d1e6"/><rect x="940.93" y="321.12" width="1.39" height="1.05" fill="#aebfd8"/><rect x="940.36" y="306.06" width="1" height="1.53" fill="#8ea9cf"/><rect x="937.47" y="311.74" width="1.3" height="2.09" fill="#8ea9cf"/><rect x="934.3" y="311.59" width="3.48" height="4.17" fill="#2ea84a"/><rect x="938.88" y="314.22" width="1.74" height="1.76" fill="#d03a50"/><rect x="938.45" y="310.49" width="1.91" height="1.76" fill="#3a7fe0"/><rect x="937.14" y="307.86" width="1.74" height="1.76" fill="#c07a5a"/><path d="M934.1 323.67V320.15H937.58L942.8 322.57V323.67Z" fill="#cf3030"/><rect x="902.6" y="296.8" width="11.9" height="32.7" rx=".9" fill="#e0521e"/><rect x="903.2" y="297.4" width="10.7" height="31.5" rx=".6" fill="#161616"/><rect x="903.9" y="300.56" width="9.5" height="23.54" fill="#a3bbd9"/><rect x="904.62" y="318.16" width="1.48" height="1.06" fill="#8ea9cf"/><rect x="904.08" y="307.12" width="1.1" height="2.34" fill="#8ea9cf"/><rect x="910.64" y="303.91" width="1.94" height="1.84" fill="#95afd4"/><rect x="909.94" y="316.09" width="1.18" height="2.01" fill="#7f9cc8"/><rect x="908.98" y="301.5" width="2.07" height="1.88" fill="#95afd4"/><rect x="909.7" y="318.06" width="2.09" height="2.05" fill="#8ea9cf"/><rect x="908.39" y="318.07" width="1.99" height="1.82" fill="#b7cbe4"/><rect x="910.95" y="315.27" width="1.77" height="1.12" fill="#95afd4"/><rect x="904.23" y="314.29" width="1.45" height="1.63" fill="#b7cbe4"/><rect x="904.3" y="300.97" width="1.82" height="1.69" fill="#aebfd8"/><rect x="903.93" y="317.75" width="2.12" height="2.26" fill="#95afd4"/><rect x="904.63" y="311.89" width="1.88" height="1.35" fill="#95afd4"/><rect x="904.49" y="306.28" width="1.91" height="1.32" fill="#95afd4"/><rect x="909.03" y="310.48" width="1.09" height="2.27" fill="#7f9cc8"/><rect x="906.17" y="301.57" width="1.77" height="1.11" fill="#95afd4"/><rect x="905.06" y="306.03" width="1.83" height="1.87" fill="#95afd4"/><rect x="904.95" y="310.95" width="1.32" height="1.94" fill="#7f9cc8"/><rect x="909.37" y="315.12" width="1.85" height="1.4" fill="#c2d1e6"/><rect x="907.58" y="317.09" width="1.24" height="2.37" fill="#aebfd8"/><rect x="911.3" y="300.94" width="1.09" height="1.71" fill="#7f9cc8"/><rect x="904.1" y="311.39" width="2.85" height="4" fill="#b8935e"/><rect x="907.51" y="311.16" width="2.85" height="4.47" fill="#2ea84a"/><rect x="910.93" y="312.33" width="1.33" height="1.65" fill="#3a86e0"/><rect x="910.74" y="314.69" width="1.52" height="1.65" fill="#d8405a"/><rect x="904.1" y="317.98" width="1.71" height="1.88" fill="#d0553a"/><rect x="904.1" y="320.57" width="3.23" height="3.53" fill="#29a8e0"/><path d="M907.7 324.1V320.34H910.55L913.4 322.93V324.1Z" fill="#cf3030"/><rect x="914.1" y="296.8" width="18.7" height="33" rx=".9" fill="#3cc03c"/><rect x="914.7" y="297.4" width="17.5" height="31.8" rx=".6" fill="#161616"/><rect x="915.4" y="300.6" width="16.3" height="23.76" fill="#a3bbd9"/><rect x="930.02" y="322.22" width="1.25" height="2.32" fill="#7f9cc8"/><rect x="918.5" y="313.25" width="1.9" height="1.37" fill="#8ea9cf"/><rect x="920.69" y="313.72" width="1.61" height="2.24" fill="#95afd4"/><rect x="925.74" y="305.63" width="1.47" height="1.22" fill="#7f9cc8"/><rect x="929.36" y="315.43" width="1.36" height="1.2" fill="#7f9cc8"/><rect x="920.46" y="307.47" width="1" height="2.05" fill="#c2d1e6"/><rect x="927.73" y="303.21" width="1.86" height="2.26" fill="#8ea9cf"/><rect x="919.66" y="308.69" width="1.47" height="2.22" fill="#7f9cc8"/><rect x="916.52" y="320.73" width="2.03" height="1.39" fill="#c2d1e6"/><rect x="916.16" y="315" width="2.12" height="1.35" fill="#95afd4"/><rect x="919.31" y="311.71" width="1.93" height="2.1" fill="#8ea9cf"/><rect x="921.69" y="301.23" width="1.48" height="2.23" fill="#95afd4"/><rect x="923.55" y="305.02" width="1.06" height="2.03" fill="#b7cbe4"/><rect x="922.03" y="316.97" width="2.04" height="1.68" fill="#95afd4"/><rect x="928.81" y="312.57" width="1.57" height="1.48" fill="#8ea9cf"/><rect x="919.78" y="316.68" width="1.31" height="1.92" fill="#95afd4"/><rect x="919.82" y="312.72" width="1.14" height="1.9" fill="#7f9cc8"/><rect x="916.51" y="311.49" width="1.66" height="1.63" fill="#7f9cc8"/><rect x="920.29" y="317.12" width="1.17" height="1.27" fill="#7f9cc8"/><rect x="916.73" y="308.04" width="1.38" height="1.52" fill="#b7cbe4"/><rect x="927.3" y="304.99" width="1.9" height="1.58" fill="#b7cbe4"/><rect x="921.48" y="312" width="1.32" height="2.05" fill="#7f9cc8"/><rect x="922.72" y="313.09" width="1.15" height="1.7" fill="#c2d1e6"/><rect x="924.66" y="319.37" width="1.11" height="2.26" fill="#8ea9cf"/><rect x="921.05" y="314.65" width="2.14" height="2.19" fill="#7f9cc8"/><rect x="928.23" y="301.07" width="1.51" height="2.07" fill="#b7cbe4"/><rect x="927.22" y="321.66" width="1" height="1.55" fill="#7f9cc8"/><rect x="929.02" y="318.56" width="2.17" height="1.35" fill="#7f9cc8"/><rect x="917" y="303.95" width="2.17" height="1.15" fill="#aebfd8"/><rect x="927.53" y="315.85" width="1.1" height="2.09" fill="#7f9cc8"/><rect x="915.42" y="303.33" width="2.1" height="1.9" fill="#aebfd8"/><rect x="919.87" y="303.38" width="1.63" height="1.61" fill="#c2d1e6"/><rect x="926.63" y="302.76" width="1.63" height="1.82" fill="#c2d1e6"/><rect x="921.1" y="305.46" width="1" height="1.75" fill="#aebfd8"/><rect x="930.05" y="306.66" width="1.77" height="2.24" fill="#c2d1e6"/><rect x="915.6" y="311.52" width="4.89" height="4.04" fill="#b8935e"/><rect x="921.59" y="311.29" width="4.89" height="4.51" fill="#2ea84a"/><rect x="927.46" y="312.48" width="2.28" height="1.66" fill="#3a86e0"/><rect x="927.14" y="314.85" width="2.61" height="1.66" fill="#d8405a"/><rect x="915.6" y="318.18" width="2.93" height="1.9" fill="#d0553a"/><rect x="915.6" y="320.79" width="5.54" height="3.56" fill="#29a8e0"/><path d="M921.92 324.36V320.55H926.81L931.7 323.17V324.36Z" fill="#cf3030"/></svg>

<span class="t" style="left:636.77px;top:184px;font-size:12.2px;color:#000;transform:scaleX(0.9342)">Panasit</span>
<span class="t" style="left:511.62px;top:246px;font-size:12.2px;color:#000;transform:scaleX(0.9771)">Nokia Report</span>
<span class="t" style="left:877.98px;top:346px;font-size:12.2px;color:#000;transform:scaleX(0.9758)">Windows 10 for</span>
<span class="t" style="left:901.43px;top:361px;font-size:12.2px;color:#000;transform:scaleX(1.0330)">phone</span>
<span class="t" style="left:937.42px;top:582px;font-size:12.2px;color:#000;transform:scaleX(0.9641)">Insert</span>
<div class="a" id="filtertxt" style="left:911px;top:551px;width:166px;height:21px;overflow:hidden"><span class="t" style="left:-911px;margin-left:913.05px;top:-551px;margin-top:553px;font-size:12.2px;color:#000;transform:scaleX(1.0101)">*.jpg;*.jpeg;*.jfif;*.jpe;*.gif;*.png</span></div>

<span class="t" style="left:455px;top:150.5px;font-size:12px;color:#000">เปิด</span>
<span class="t" style="left:594px;top:184px;font-size:12px;color:#000">ผู้ใช้</span>
<span class="t" style="left:697px;top:184px;font-size:12px;color:#000">รูปภาพ</span>
<span class="t" style="left:908px;top:184px;font-size:12px;color:#6d6d6d">ค้นหา รูปภาพ</span>
<span class="t" style="left:464px;top:217px;font-size:12px;color:#1e395b">จัดระเบียบ</span>
<span class="t" style="left:553px;top:217px;font-size:12px;color:#1e395b">โฟลเดอร์ใหม่</span>
<span class="t" style="left:495px;top:277px;font-size:12px;color:#000">พีซีเครื่องนี้</span>
<span class="t" style="left:511px;top:301px;font-size:12px;color:#000">ดาวน์โหลด</span>
<span class="t" style="left:511px;top:325px;font-size:12px;color:#000">เดสก์ท็อป</span>
<span class="t" style="left:511px;top:349px;font-size:12px;color:#000">เพลง</span>
<span class="t" style="left:511px;top:373px;font-size:12px;color:#000">รูปภาพ</span>
<span class="t" style="left:511px;top:397px;font-size:12px;color:#000">วิดีโอ</span>
<span class="t" style="left:511px;top:421px;font-size:12px;color:#000">เอกสาร</span>
<span class="t" style="left:511px;top:445px;width:77px;overflow:hidden;font-size:12px;color:#000">ดิสก์ภายในเครื่อง</span>
<span class="t" style="left:511px;top:469px;width:77px;overflow:hidden;font-size:12px;color:#000">ดิสก์ภายในเครื่อง</span>
<span class="t" style="left:511px;top:493px;width:77px;overflow:hidden;font-size:12px;color:#000">ดิสก์ภายในเครื่อง</span>
<span class="t" style="left:495px;top:525px;font-size:12px;color:#000">เครือข่าย</span>
<span class="t" style="left:647px;top:345.5px;font-size:12px;color:#000">ภาพหน้าจอ</span>
<span class="t" style="left:775px;top:345.5px;font-size:12px;color:#000">ม้วนฟิล์ม</span>
<span class="t" style="left:576px;top:551px;font-size:12px;color:#000">ชื่อแฟ้ม:</span>
<span class="t" style="left:1037px;top:581.5px;font-size:12px;color:#000">ยกเลิก</span>
</div>
<!-- ================= Touch keyboard button ================= -->
<div id="kbd"></div>
<div class="g" id="keyboard">
<svg style="left:1286px;top:660px" width="42" height="30" viewBox="1286 660 42 30"><path d="M1290.9 668.9V667.5A3.55 3.55 0 0 1 1298 667.5V670.5" fill="none" stroke="#fff" stroke-width="1.3"/><rect x="1298.4" y="672.1" width="25" height="13.8" rx=".8" fill="#fff"/><rect x="1301" y="674.9" width="20.2" height="9" fill="#231f20"/><g fill="#fff"><rect x="1302.2" y="675.9" width="3.8" height="3.1"/><rect x="1307" y="675.9" width="3.6" height="3.1"/><rect x="1311.8" y="675.9" width="3.6" height="3.1"/><rect x="1316.3" y="675.9" width="3.8" height="3.1"/><rect x="1302.2" y="680.2" width="3.8" height="2.7"/><rect x="1307" y="680.2" width="8.4" height="2.7"/><rect x="1316.3" y="680.2" width="3.8" height="2.7"/></g><rect x="1295.3" y="670.1" width="9" height="6.2" fill="#fff" stroke="#231f20" stroke-width="1.2" paint-order="stroke"/></svg>

</div>
</body>
</html>
